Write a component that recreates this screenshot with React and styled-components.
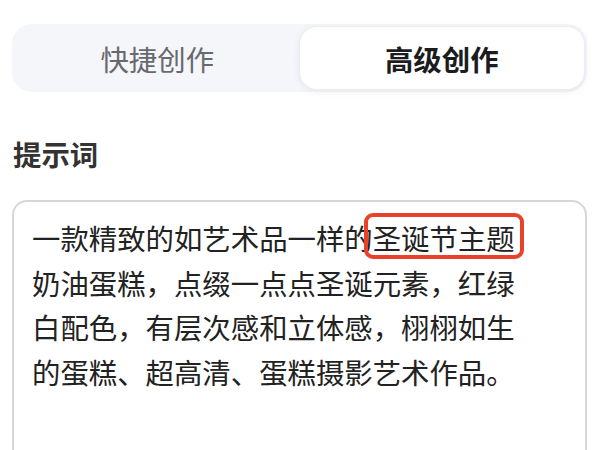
import React from 'react'

// styled
import styled, { createGlobalStyle } from 'styled-components'

const GlobalStyle = createGlobalStyle`
  html, body {
    margin: 0;
    padding: 0;
    background: #ffffff;
    font-family: "Noto Sans CJK SC", "Noto Sans", sans-serif;
  }
`;

export default function App() {
    return (
        <Page>
            <GlobalStyle />
            <Tabs>
                <Tab>快捷创作</Tab>
                <Tab active>高级创作</Tab>
            </Tabs>
            <Label>提示词</Label>
            <PromptBox>
                一款精致的如艺术品一样的<Marked>圣诞节主题</Marked>奶油蛋糕，点缀一点点圣诞元素，红绿白配色，有层次感和立体感，栩栩如生的蛋糕、超高清、蛋糕摄影艺术作品。
            </PromptBox>
        </Page>
    )
}

const Page = styled.div`
  box-sizing: border-box;
  width: 606px;
  padding: 24px 19px 0 12px;
  display: flex;
  flex-direction: column;
`;

const Tabs = styled.div`
  box-sizing: border-box;
  height: 68px;
  padding: 3px;
  border-radius: 20px;
  background-color: #f5f6fa;
  display: grid;
  grid-template-columns: 1fr 1fr;
`;

const Tab = styled.div`
  display: flex;
  align-items: center;
  justify-content: center;
  border-radius: 17px;
  font-size: 28.4px;
  font-weight: ${p => (p.active ? 700 : 400)};
  color: ${p => (p.active ? '#1c1c1e' : '#68696e')};
  background-color: ${p => (p.active ? '#ffffff' : 'transparent')};
  box-shadow: ${p => (p.active ? '0 0 0 1px #ececf2, 0 2px 8px rgba(30, 30, 60, 0.08)' : 'none')};
`;

const Label = styled.div`
  margin-top: 42px;
  padding-left: 1px;
  font-size: 28.4px;
  font-weight: 700;
  line-height: 40px;
  color: #333333;
`;

const PromptBox = styled.div`
  box-sizing: border-box;
  margin-top: 26px;
  min-height: 320px;
  padding: 14px 60px 0 18px;
  border: 2px solid #d6d6db;
  border-radius: 15px;
  font-size: 28.4px;
  line-height: 44.6px;
  color: #222222;
`;

const Marked = styled.span`
  position: relative;

  &::after {
    content: '';
    position: absolute;
    left: -9px;
    right: -9px;
    top: -4px;
    bottom: -1px;
    border: 4px solid #e8432a;
    border-radius: 9px;
  }
`;
